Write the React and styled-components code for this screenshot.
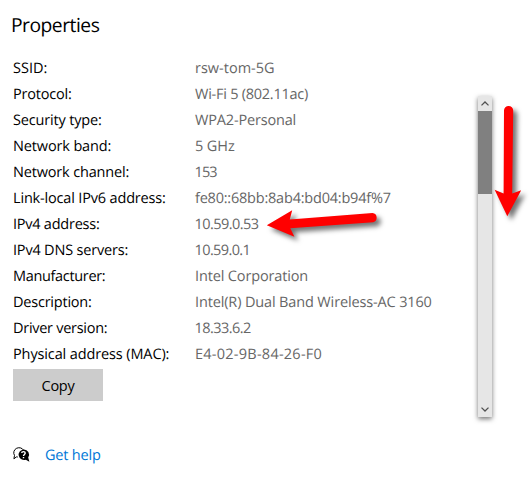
import React from "react";
import styled, { createGlobalStyle } from "styled-components";

const GlobalStyle = createGlobalStyle`
  * { box-sizing: border-box; }
  body {
    margin: 0;
    background: #fff;
    font-family: "Open Sans", "Noto Sans", sans-serif;
    font-size: 14.5px;
    color: #000;
    text-rendering: geometricPrecision;
  }
`;

const Page = styled.main`
  position: relative;
  display: flex;
  width: 532px;
  height: 486px;
  overflow: hidden;
`;

const Content = styled.section`
  width: 478px;
  padding: 11px 0 0 13px;
`;

const Title = styled.h1`
  margin: 0 0 17px -2px;
  font-size: 19.3px;
  line-height: 28px;
  font-weight: 400;
  letter-spacing: -0.5px;
`;

const List = styled.dl`
  display: grid;
  grid-template-columns: 182px 1fr;
  grid-auto-rows: 26px;
  margin: 0;
  line-height: 26px;
  white-space: nowrap;
`;

const Label = styled.dt`
  letter-spacing: ${(p) => p.$spacing}px;
`;

const Value = styled.dd`
  margin: 0 0 0 ${(p) => p.$shift || 0}px;
  color: #666;
  letter-spacing: ${(p) => p.$spacing}px;
`;

const CopyButton = styled.button`
  display: block;
  width: 90px;
  height: 32px;
  margin: 1px 0 0;
  padding: 1px 0 0;
  border: 0;
  background: #ccc;
  color: #000;
  font: inherit;
  line-height: 31px;
  letter-spacing: -0.3px;
`;

const HelpRow = styled.div`
  display: flex;
  align-items: center;
  gap: 15px;
  height: 26px;
  margin-top: 42px;
`;

const HelpLink = styled.a`
  color: #0078d7;
  line-height: 26px;
  letter-spacing: -0.2px;
`;

const HelpIcon = styled.svg`
  display: block;
  width: 17px;
  height: 17px;
  margin-top: -4px;
`;

const Scrollbar = styled.aside`
  display: flex;
  flex-direction: column;
  width: 14px;
  height: 321px;
  margin-top: 96px;
  background: #e6e6e6;
  box-shadow: 0 2px 5px rgba(0, 0, 0, 0.55);
`;

const ScrollButton = styled.div`
  display: grid;
  place-items: center;
  height: 15px;
`;

const Chevron = styled.svg`
  display: block;
  width: 8px;
  height: 5px;
  fill: none;
  stroke: #505050;
  stroke-width: 1.3;
`;

const Thumb = styled.div`
  height: 83px;
  background: #808080;
`;

const Track = styled.div`
  flex: 1;
`;

const Annotations = styled.svg`
  position: absolute;
  inset: 0;
  width: 532px;
  height: 486px;
  pointer-events: none;
`;

const Arrow = styled.path`
  fill: #f00;
  filter: drop-shadow(4px 4px 2.5px rgba(0, 0, 0, 0.55));
`;

const properties = [
  { label: "SSID:", ls: 0, value: "rsw-tom-5G", vs: 0 },
  { label: "Protocol:", ls: -0.2, value: "Wi-Fi 5 (802.11ac)", vs: -0.25 },
  { label: "Security type:", ls: -0.17, value: "WPA2-Personal", vs: -0.17 },
  { label: "Network band:", ls: -0.14, value: "5 GHz", vs: -0.1 },
  { label: "Network channel:", ls: -0.17, value: "153", vs: -0.9, shift: -0.5 },
  { label: "Link-local IPv6 address:", ls: -0.17, value: "fe80::68bb:8ab4:bd04:b94f%7", vs: -0.21 },
  { label: "IPv4 address:", ls: -0.24, value: "10.59.0.53", vs: -0.55, shift: -0.5 },
  { label: "IPv4 DNS servers:", ls: -0.19, value: "10.59.0.1", vs: -0.6, shift: -0.5 },
  { label: "Manufacturer:", ls: -0.33, value: "Intel Corporation", vs: -0.14 },
  { label: "Description:", ls: -0.22, value: "Intel(R) Dual Band Wireless-AC 3160", vs: -0.14 },
  { label: "Driver version:", ls: -0.28, value: "18.33.6.2", vs: -0.55, shift: -0.5 },
  { label: "Physical address (MAC):", ls: -0.12, value: "E4-02-9B-84-26-F0", vs: 0.25 },
];

export default function App() {
  return (
    <>
      <GlobalStyle />
      <Page>
        <Content>
          <Title>Properties</Title>
          <List>
            {properties.map((p) => (
              <React.Fragment key={p.label}>
                <Label $spacing={p.ls}>{p.label}</Label>
                <Value $spacing={p.vs} $shift={p.shift}>{p.value}</Value>
              </React.Fragment>
            ))}
          </List>
          <CopyButton>Copy</CopyButton>
          <HelpRow>
            <HelpIcon viewBox="0 0 17 17">
              <path
                d="M4.8 11 L3.4 10.9 L0.9 12.8 L1.5 9.4 A5 4.8 0 1 1 10.6 4.2"
                fill="none"
                stroke="#000"
                strokeWidth="1"
              />
              <path d="M10.6 3.4 A5.2 5.3 0 0 1 15.2 11.6 L16.4 15.8 L12.8 13.7 A5.4 5.3 0 1 1 10.6 3.4 Z" />
              <path
                d="M8.7 7 C8.8 5.2 12.2 5.2 12.2 7.1 C12.2 8.5 10.5 8.4 10.5 10 M10.5 11 V12.3"
                fill="none"
                stroke="#fff"
                strokeWidth="1.4"
              />
            </HelpIcon>
            <HelpLink>Get help</HelpLink>
          </HelpRow>
        </Content>
        <Scrollbar>
          <ScrollButton>
            <Chevron viewBox="0 0 8 5"><path d="M0.5 4.4 L4 1 L7.5 4.4" /></Chevron>
          </ScrollButton>
          <Thumb />
          <Track />
          <ScrollButton>
            <Chevron viewBox="0 0 8 5"><path d="M0.5 0.6 L4 4 L7.5 0.6" /></Chevron>
          </ScrollButton>
        </Scrollbar>
        <Annotations viewBox="0 0 532 486">
          <Arrow d="M266.8 225.3 L292.2 210.3 L289.8 219.6 L372.5 213 A4.7 4.7 0 0 1 373.2 222.2 L290.3 228.2 L294.4 236.7 Z" />
          <Arrow d="M507.3 216.3 L494.6 189.8 L503.6 193.4 L504 110.6 A4.6 4.6 0 0 1 513.2 110.6 L512.2 193.6 L521.2 190.2 Z" />
        </Annotations>
      </Page>
    </>
  );
}
